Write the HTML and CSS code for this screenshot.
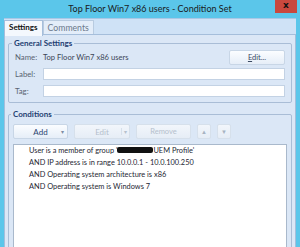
FILE: index.html
```html
<!DOCTYPE html>
<html lang="en">
<head>
  <meta charset="UTF-8" />
  <title>Condition Set</title>
  <link rel="stylesheet" href="styles.css">
</head>
<body>
  <div class="window">
    <div class="titlebar">
      <span></span>
      <span class="title">Top Floor Win7 x86 users - Condition Set</span>
      <span class="close">x</span>
    </div>

    <div class="client">
      <div class="tabs">
        <div class="tab active">Settings</div>
        <div class="tab">Comments</div>
      </div>

      <div class="page">
        <fieldset class="group general">
          <legend>General Settings</legend>
          <div class="row name-row">
            <span class="lbl">Name:</span>
            <span class="value">Top Floor Win7 x86 users</span>
            <button class="btn"><u>E</u>dit...</button>
          </div>
          <div class="row">
            <span class="lbl">Label:</span>
            <input class="field" type="text">
          </div>
          <div class="row">
            <span class="lbl">Tag:</span>
            <input class="field" type="text">
          </div>
        </fieldset>

        <fieldset class="group conditions">
          <legend>Conditions</legend>
          <div class="toolbar">
            <button class="btn split">Add<span class="arrow">&#9662;</span></button>
            <button class="btn split disabled">Edit<span class="arrow">&#9662;</span></button>
            <button class="btn disabled wide">Remove</button>
            <button class="btn disabled small">&#9650;</button>
            <button class="btn disabled small">&#9660;</button>
          </div>
          <div class="list">
            <div class="item">User is a member of group '<span class="redact"></span>UEM Profile'</div>
            <div class="item">AND IP address is in range 10.0.0.1 - 10.0.100.250</div>
            <div class="item">AND Operating system architecture is x86</div>
            <div class="item">AND Operating system is Windows 7</div>
          </div>
        </fieldset>
      </div>
    </div>
  </div>
</body>
</html>
```

FILE: styles.css
```css
body {
  margin: 0;
  font-family: Lato, "Open Sans", sans-serif;
  background: #5bc6ea;
}

.window {
  width: 300px;
  height: 247px;
  overflow: hidden;
  background: #5bc6ea;
  padding: 0 4px;
  box-sizing: border-box;
}

.titlebar {
  height: 18px;
  display: grid;
  grid-template-columns: 1fr auto 1fr;
  align-items: start;
}

.title {
  font-size: 9px;
  line-height: 18px;
  color: #1a1a1a;
}

.close {
  justify-self: end;
  width: 22px;
  height: 13px;
  margin-right: -1px;
  background: #c9483e;
  color: #111;
  font-family: "DejaVu Sans", sans-serif;
  font-weight: bold;
  font-size: 9px;
  line-height: 11px;
  text-align: center;
}

.client {
  background: #cfe2f6;
  height: 229px;
  border-top: 1px solid #a9c8e6;
}

.tabs {
  display: flex;
  padding: 1px 0 0 0;
  height: 14px;
  border-bottom: 1px solid #a5bedb;
}

.tab {
  font-size: 8.7px;
  line-height: 13px;
  padding: 0 4px;
  color: #6b7a8c;
  border: 1px solid #b8cbe0;
  border-bottom: none;
  background: #e3edf9;
}

.tab.active {
  font-size: 8px;
  color: #111;
  font-weight: bold;
  background: #f4f8fd;
  border-color: #a5bedb;
  height: 15px;
}

.page {
  background: #dbe7f6;
  padding: 3px 3px 0;
  height: 211px;
  border-left: 1px solid #a5bedb;
  border-right: 1px solid #a5bedb;
}

.group {
  margin: 0;
  border: 1px solid #a9bdd6;
  border-radius: 2px;
  padding: 0 6px;
}

.group legend {
  font-size: 8px;
  font-weight: bold;
  color: #1f3f73;
  padding: 0 2px;
  margin-left: -3px;
  line-height: 11px;
}

.general {
  height: 63px;
}

.row {
  display: flex;
  align-items: center;
  height: 17px;
}

.name-row {
  height: 16px;
}

.lbl {
  width: 28px;
  font-size: 7.8px;
  color: #5a6472;
}

.value {
  flex: 1;
  font-size: 7.6px;
  color: #3b4656;
}

.field {
  flex: 1;
  height: 12px;
  box-sizing: border-box;
  border: 1px solid #c3d2e4;
  background: #fff;
  margin: 0;
  padding: 0;
}

.btn {
  font-family: inherit;
  font-size: 7.5px;
  height: 15px;
  padding: 0;
  margin: 0;
  border: 1px solid #c8d6e6;
  border-radius: 2px;
  background: linear-gradient(#fbfdff, #e6eef8);
  color: #3a4a63;
}

.name-row .btn {
  width: 56px;
}

.conditions {
  margin-top: 6px;
  height: 140px;
  padding: 4px 4px 0;
}

.conditions legend {
  margin-left: -2px;
}

.toolbar {
  display: flex;
  gap: 6px;
  height: 15px;
}

.btn.split {
  width: 55px;
  display: flex;
  align-items: center;
  justify-content: center;
  position: relative;
  font-size: 8px;
  color: #2b4470;
}

.btn.split .arrow {
  position: absolute;
  right: 3px;
  font-size: 6px;
  color: #7c8ca4;
}

.btn.split.disabled {
  width: 56px;
}

.btn.split.disabled .arrow {
  right: 0;
  width: 7px;
  border-left: 1px solid #d6e0eb;
  color: #b5c0cc;
}

.btn.disabled {
  color: #b5c0cc;
  background: linear-gradient(#f2f6fb, #e6edf6);
  border-color: #d6e0eb;
}

.btn.wide {
  width: 55px;
}

.btn.small {
  width: 14px;
  font-size: 6px;
  color: #a7b3c2;
}

.list {
  margin-top: 5px;
  background: #fff;
  border: 1px solid #a9b9cc;
  height: 120px;
  padding: 0 0 0 15px;
}

.item {
  font-size: 7.4px;
  line-height: 12px;
  color: #1e2633;
  white-space: nowrap;
}

.redact {
  display: inline-block;
  width: 36px;
  height: 6px;
  background: #111;
  border-radius: 2px;
  vertical-align: 0;
}
```
